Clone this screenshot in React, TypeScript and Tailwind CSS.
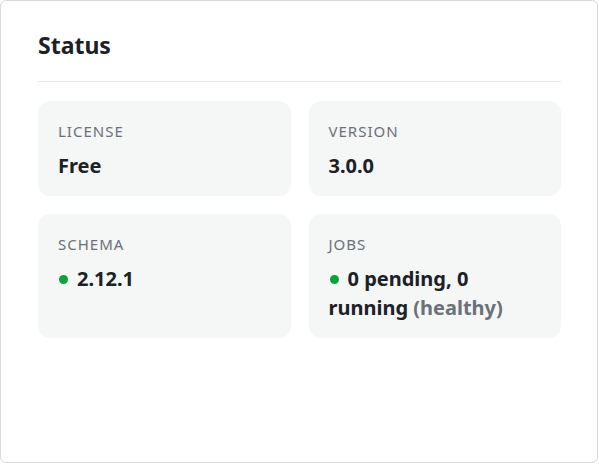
type StatusItem = {
  label: string;
  value: string;
  dot?: boolean;
  note?: string;
};

const ITEMS: StatusItem[] = [
  { label: "License", value: "Free" },
  { label: "Version", value: "3.0.0" },
  { label: "Schema", value: "2.12.1", dot: true },
  { label: "Jobs", value: "0 pending, 0 running", dot: true, note: "(healthy)" },
];

export default function App() {
  return (
    <div className="h-[464px] w-[599px] bg-white font-['Noto_Sans',sans-serif] text-[#1c2127]">
      <div className="h-[463px] w-[598px] rounded-md border border-[#d9dadb] pb-[37px] pl-[37px] pr-[36px] pt-[24px]">
        <header className="border-b border-[#e9eaeb] pb-[16px]">
          <h2 className="text-[23px] font-bold leading-[40px]">Status</h2>
        </header>

        <div className="mt-[19px] grid grid-cols-2 gap-[18px]">
          {ITEMS.map((item) => (
            <div key={item.label} className="rounded-xl bg-[#f5f6f6] px-5 pb-4 pt-5">
              <p className="text-[15px] uppercase leading-5 tracking-[1px] text-[#6b7079]">{item.label}</p>
              <p className="mt-[10px] text-[20px] font-bold leading-[29px]">
                {item.dot ? (
                  <span className="ml-[1px] mr-[9px] inline-block h-[9px] w-[9px] translate-y-[-2px] rounded-full bg-[#0aa33a]" />
                ) : null}
                {item.value}
                {item.note ? <span className="text-[#6b7079]"> {item.note}</span> : null}
              </p>
            </div>
          ))}
        </div>
      </div>
    </div>
  );
}
